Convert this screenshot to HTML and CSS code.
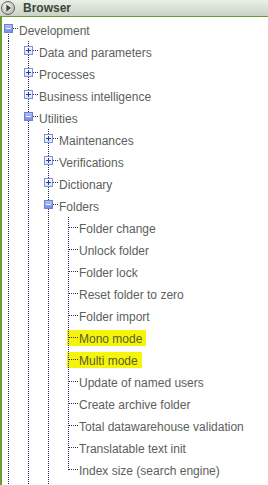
FILE: index.html
```html
<!DOCTYPE html>
<html>
<head>
<meta charset="utf-8">
<link rel="stylesheet" href="styles.css">
</head>
<body>
<div class="panel">
  <div class="header">
    <svg class="hicon" width="16" height="16" viewBox="0 0 16 16">
      <defs>
        <radialGradient id="hg" cx="0.4" cy="0.35" r="0.7">
          <stop offset="0" stop-color="#f4f5f2"/>
          <stop offset="1" stop-color="#b3b9b0"/>
        </radialGradient>
      </defs>
      <circle cx="8" cy="8" r="6.5" fill="url(#hg)" stroke="#5f665d" stroke-width="1"/>
      <path d="M6.3 4.6 L11 8 L6.3 11.4 Z" fill="#3d463b"/>
    </svg>
    <span class="htitle">Browser</span>
  </div>
  <div class="tree">
    <div class="row"><span class="elb exp first"><svg class="tg" width="9" height="9" viewBox="0 0 9 9"><use href="#minus"/></svg></span><span class="txt">Development</span></div>

    <div class="row"><span class="ind l"></span><span class="elb exp"><svg class="tg" width="9" height="9" viewBox="0 0 9 9"><use href="#plus"/></svg></span><span class="txt">Data and parameters</span></div>
    <div class="row"><span class="ind l"></span><span class="elb exp"><svg class="tg" width="9" height="9" viewBox="0 0 9 9"><use href="#plus"/></svg></span><span class="txt">Processes</span></div>
    <div class="row"><span class="ind l"></span><span class="elb exp"><svg class="tg" width="9" height="9" viewBox="0 0 9 9"><use href="#plus"/></svg></span><span class="txt">Business intelligence</span></div>
    <div class="row"><span class="ind l"></span><span class="elb exp"><svg class="tg" width="9" height="9" viewBox="0 0 9 9"><use href="#minus"/></svg></span><span class="txt">Utilities</span></div>

    <div class="row"><span class="ind l"></span><span class="ind l"></span><span class="elb exp"><svg class="tg" width="9" height="9" viewBox="0 0 9 9"><use href="#plus"/></svg></span><span class="txt">Maintenances</span></div>
    <div class="row"><span class="ind l"></span><span class="ind l"></span><span class="elb exp"><svg class="tg" width="9" height="9" viewBox="0 0 9 9"><use href="#plus"/></svg></span><span class="txt">Verifications</span></div>
    <div class="row"><span class="ind l"></span><span class="ind l"></span><span class="elb exp"><svg class="tg" width="9" height="9" viewBox="0 0 9 9"><use href="#plus"/></svg></span><span class="txt">Dictionary</span></div>
    <div class="row"><span class="ind l"></span><span class="ind l"></span><span class="elb exp"><svg class="tg" width="9" height="9" viewBox="0 0 9 9"><use href="#minus"/></svg></span><span class="txt">Folders</span></div>

    <div class="row"><span class="ind l"></span><span class="ind l"></span><span class="ind l"></span><span class="elb leaf"></span><span class="txt">Folder change</span></div>
    <div class="row"><span class="ind l"></span><span class="ind l"></span><span class="ind l"></span><span class="elb leaf"></span><span class="txt">Unlock folder</span></div>
    <div class="row"><span class="ind l"></span><span class="ind l"></span><span class="ind l"></span><span class="elb leaf"></span><span class="txt">Folder lock</span></div>
    <div class="row"><span class="ind l"></span><span class="ind l"></span><span class="ind l"></span><span class="elb leaf"></span><span class="txt">Reset folder to zero</span></div>
    <div class="row"><span class="ind l"></span><span class="ind l"></span><span class="ind l"></span><span class="elb leaf"></span><span class="txt">Folder import</span></div>
    <div class="row"><span class="ind l"></span><span class="ind l"></span><span class="ind l"></span><span class="elb leaf hl"></span><span class="txt hl">Mono mode</span></div>
    <div class="row"><span class="ind l"></span><span class="ind l"></span><span class="ind l"></span><span class="elb leaf hl"></span><span class="txt hl">Multi mode</span></div>
    <div class="row"><span class="ind l"></span><span class="ind l"></span><span class="ind l"></span><span class="elb leaf"></span><span class="txt">Update of named users</span></div>
    <div class="row"><span class="ind l"></span><span class="ind l"></span><span class="ind l"></span><span class="elb leaf"></span><span class="txt">Create archive folder</span></div>
    <div class="row"><span class="ind l"></span><span class="ind l"></span><span class="ind l"></span><span class="elb leaf"></span><span class="txt">Total datawarehouse validation</span></div>
    <div class="row"><span class="ind l"></span><span class="ind l"></span><span class="ind l"></span><span class="elb leaf"></span><span class="txt">Translatable text init</span></div>
    <div class="row"><span class="ind l"></span><span class="ind l"></span><span class="ind l"></span><span class="elb leaf last"></span><span class="txt">Index size (search engine)</span></div>
    <div class="row"><span class="ind l"></span><span class="ind l"></span><span class="ind l"></span></div>
  </div>
</div>
<svg width="0" height="0" class="defs">
  <defs>
    <linearGradient id="pg" x1="0" y1="0" x2="0" y2="1">
      <stop offset="0" stop-color="#ffffff"/>
      <stop offset="1" stop-color="#d9e1f7"/>
    </linearGradient>
    <linearGradient id="mg" x1="0" y1="0" x2="0" y2="1">
      <stop offset="0" stop-color="#b3c3f6"/>
      <stop offset="1" stop-color="#7189e2"/>
    </linearGradient>
    <g id="plus">
      <rect x="0.5" y="0.5" width="8" height="8" fill="url(#pg)" stroke="#7d92d9"/>
      <rect x="2" y="4" width="5" height="1" fill="#1f3d9e"/>
      <rect x="4" y="2" width="1" height="5" fill="#1f3d9e"/>
    </g>
    <g id="minus">
      <rect x="0.5" y="0.5" width="8" height="8" fill="url(#mg)" stroke="#6b82d8"/>
      <rect x="2" y="4" width="5" height="1" fill="#f1f4ff"/>
    </g>
  </defs>
</svg>
</body>
</html>
```
FILE: styles.css
```css
html, body {
  margin: 0;
  padding: 0;
  background: #ffffff;
}
body {
  width: 268px;
  height: 485px;
  overflow: hidden;
  font-family: "Liberation Sans", Arial, sans-serif;
}
.defs {
  display: block;
  width: 0;
  height: 0;
  overflow: hidden;
}
.panel {
  display: flex;
  flex-direction: column;
  height: 485px;
}
.header {
  height: 16px;
  border-bottom: 1px solid #6f9a3c;
  background: linear-gradient(to bottom, #eaeee8 0%, #dfe5dc 35%, #c9d2c5 100%);
  display: flex;
  align-items: center;
  flex: none;
}
.hicon {
  margin-left: 0;
  flex: none;
}
.htitle {
  margin-left: 7px;
  font-weight: bold;
  font-size: 12px;
  color: #3a4739;
  line-height: 16px;
}
.tree {
  flex: 1;
  border-left: 2px solid #6c9a33;
  padding-top: 2px;
  overflow: hidden;
}
.row {
  display: flex;
  height: 22px;
  align-items: stretch;
}
.ind {
  width: 20px;
  flex: none;
}
.ind.l {
  background: repeating-linear-gradient(to bottom, #2c2c6c 0 1px, transparent 1px 2px) 6px 0 / 1px 100% no-repeat;
}
.elb {
  width: 17px;
  flex: none;
  display: flex;
  align-items: flex-start;
}
.elb.exp {
  padding: 5px 0 0 2px;
  box-sizing: border-box;
  background:
    repeating-linear-gradient(to right, #2c2c6c 0 1px, transparent 1px 2px) 11px 9px / 5px 1px no-repeat,
    repeating-linear-gradient(to bottom, #2c2c6c 0 1px, transparent 1px 2px) 6px 0 / 1px 100% no-repeat;
}
.elb.exp.first {
  background:
    repeating-linear-gradient(to right, #2c2c6c 0 1px, transparent 1px 2px) 11px 9px / 5px 1px no-repeat,
    repeating-linear-gradient(to bottom, #2c2c6c 0 1px, transparent 1px 2px) 6px 11px / 1px 11px no-repeat;
}
.tg {
  display: block;
  flex: none;
}
.elb.leaf {
  background:
    repeating-linear-gradient(to right, #2c2c6c 0 1px, transparent 1px 2px) 7px 10px / 9px 1px no-repeat,
    repeating-linear-gradient(to bottom, #2c2c6c 0 1px, transparent 1px 2px) 6px 0 / 1px 100% no-repeat;
}
.elb.leaf.last {
  background:
    repeating-linear-gradient(to right, #2c2c6c 0 1px, transparent 1px 2px) 7px 10px / 9px 1px no-repeat,
    repeating-linear-gradient(to bottom, #2c2c6c 0 1px, transparent 1px 2px) 6px 0 / 1px 11px no-repeat;
}
.elb.leaf.hl {
  background:
    repeating-linear-gradient(to right, #2c2c6c 0 1px, transparent 1px 2px) 7px 10px / 9px 1px no-repeat,
    repeating-linear-gradient(to bottom, #2c2c6c 0 1px, transparent 1px 2px) 6px 0 / 1px 100% no-repeat,
    linear-gradient(#f5f50c, #f5f50c) 5px 3px / 12px 16px no-repeat;
}
.txt {
  font-size: 12px;
  line-height: 22px;
  color: #5b615b;
  white-space: nowrap;
  padding-top: 1px;
  box-sizing: border-box;
}
.txt.hl {
  align-self: center;
  height: 16px;
  line-height: 16px;
  padding: 1px 4px 0 0;
  margin-top: 0;
  background: #f5f50c;
  color: #5a5c2a;
}
```
